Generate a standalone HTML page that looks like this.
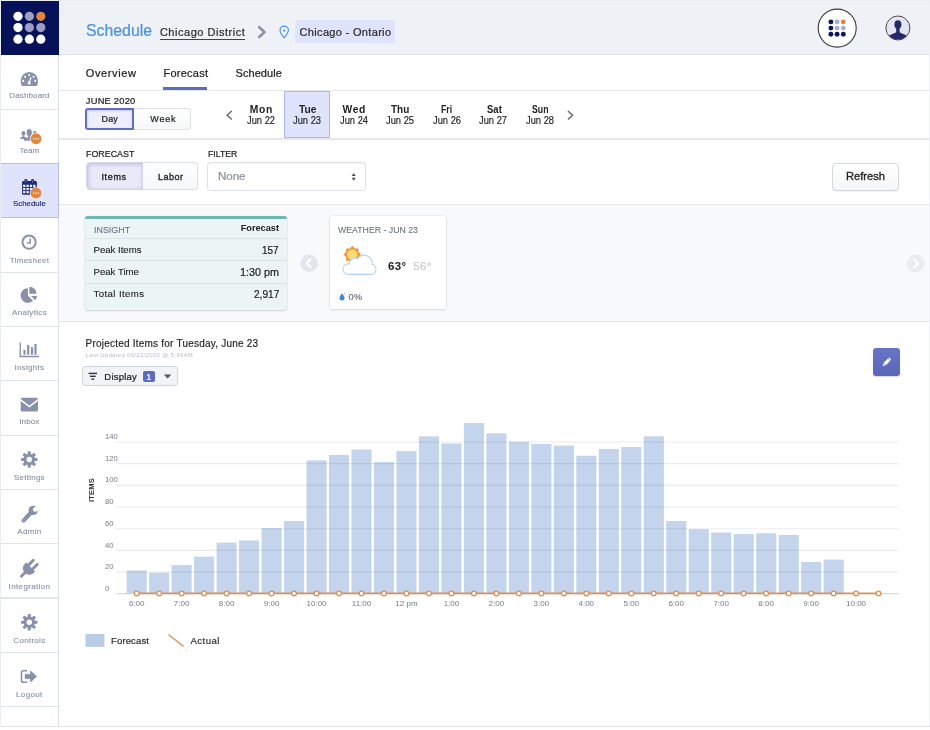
<!DOCTYPE html>
<html lang="en"><head><meta charset="utf-8"><title>Schedule - Forecast</title>
<style>
html,body{margin:0;padding:0;}
body{width:930px;height:730px;position:relative;overflow:hidden;background:#fff;font-family:"Liberation Sans",Arial,sans-serif;}
.t{position:absolute;white-space:nowrap;line-height:1;}
.b{position:absolute;box-sizing:border-box;}
svg{position:absolute;overflow:visible;}
.tx{position:absolute;left:0;top:0;width:930px;height:730px;will-change:transform;}
</style></head><body>
<div class="b" style="left:59px;top:0px;width:870px;height:55px;background:#eef2f6;border-bottom:1px solid #dde2ea;border-top:1px solid #e6e9ef;"></div>
<div class="b" style="left:929px;top:0px;width:1px;height:727px;background:#eef0f5;"></div>
<div class="b" style="left:0px;top:726px;width:930px;height:1.4px;background:#e0e1e4;"></div>
<div class="b" style="left:0px;top:55px;width:59.1px;height:671px;background:#fff;border-left:1.2px solid #dce0ec;border-right:1.2px solid #dce0ec;"></div>
<div class="b" style="left:1px;top:108.75px;width:57px;height:1.15px;background:#dfe3ed;"></div>
<div class="b" style="left:1px;top:271.65px;width:57px;height:1.15px;background:#dfe3ed;"></div>
<div class="b" style="left:1px;top:325.95px;width:57px;height:1.15px;background:#dfe3ed;"></div>
<div class="b" style="left:1px;top:380.24999999999994px;width:57px;height:1.15px;background:#dfe3ed;"></div>
<div class="b" style="left:1px;top:434.54999999999995px;width:57px;height:1.15px;background:#dfe3ed;"></div>
<div class="b" style="left:1px;top:488.84999999999997px;width:57px;height:1.15px;background:#dfe3ed;"></div>
<div class="b" style="left:1px;top:543.15px;width:57px;height:1.15px;background:#dfe3ed;"></div>
<div class="b" style="left:1px;top:597.45px;width:57px;height:1.15px;background:#dfe3ed;"></div>
<div class="b" style="left:1px;top:651.75px;width:57px;height:1.15px;background:#dfe3ed;"></div>
<div class="b" style="left:1px;top:706.05px;width:57px;height:1.15px;background:#dfe3ed;"></div>
<div class="b" style="left:0px;top:163.1px;width:59px;height:54.8px;background:#dfe3fb;border:1px solid #b4bcf0;"></div>
<div class="b" style="left:0px;top:0px;width:59px;height:55px;background:#07115a;"></div>
<div class="b" style="left:59px;top:90px;width:870px;height:1.3px;background:#e6e7ea;"></div>
<div class="b" style="left:59px;top:138.4px;width:870px;height:1.2px;background:#e6e7ea;"></div>
<div class="b" style="left:59px;top:205px;width:870px;height:116px;background:#f8f9fb;"></div>
<div class="b" style="left:59px;top:204px;width:870px;height:1.2px;background:#e9e9eb;"></div>
<div class="b" style="left:59px;top:321px;width:870px;height:1px;background:#e4e6e9;"></div>
<div class="b" style="left:0px;top:0px;width:930px;height:1px;background:#e9ecf1;"></div>
<div class="b" style="left:0px;top:0px;width:1px;height:727px;background:#e9ecf3;"></div>
<div class="b" style="left:294.8px;top:20.2px;width:100px;height:22.6px;background:#dfe3fb;border-radius:3px;"></div>
<div class="b" style="left:159.9px;top:38.5px;width:85px;height:1.2px;background:#444;"></div>
<div class="b" style="left:162.9px;top:87.2px;width:44.6px;height:2.5px;background:#5c6bc0;"></div>
<div class="b" style="left:133px;top:108.3px;width:57.7px;height:21.3px;background:linear-gradient(#fff,#f6f7f9);border:1px solid #dcdfe7;border-left:none;border-radius:0 4px 4px 0;"></div>
<div class="b" style="left:85.3px;top:108.2px;width:48.7px;height:21.4px;background:#eceefb;border:2px solid #6270c2;border-radius:3px 0 0 3px;box-shadow:inset 0 1px 2px rgba(60,70,140,.25);"></div>
<div class="b" style="left:284px;top:91.1px;width:46.3px;height:47.1px;background:#dfe3fb;border:1px solid #adb6ea;"></div>
<div class="b" style="left:142px;top:162.2px;width:55.9px;height:28.3px;background:linear-gradient(#fff,#f6f7f9);border:1px solid #dcdfe7;border-left:none;border-radius:0 4px 4px 0;"></div>
<div class="b" style="left:85.5px;top:162.2px;width:57.2px;height:28.3px;background:#e8eaf7;border:1px solid #d3d7ec;border-radius:4px 0 0 4px;box-shadow:inset 1px 1px 4px rgba(92,107,192,.38);"></div>
<div class="b" style="left:206.8px;top:162.2px;width:159.2px;height:28.4px;background:#fff;border:1px solid #dcdfe6;border-radius:3.5px;box-shadow:inset 0 1px 1px rgba(0,0,0,.03);"></div>
<div class="b" style="left:832.2px;top:162.9px;width:66.5px;height:28.3px;background:linear-gradient(#fff,#f5f6f8);border:1px solid #d3d7df;border-radius:4px;box-shadow:0 1px 1px rgba(0,0,0,.05);"></div>
<div class="b" style="left:85.3px;top:216.1px;width:202px;height:93.5px;background:#ecf5f6;border-radius:3px;box-shadow:0 0 0 .6px rgba(0,0,0,.05),0 1px 2px rgba(0,0,0,.13);overflow:hidden;"><div style="height:3.2px;background:#6db7b7"></div></div>
<div class="b" style="left:85.3px;top:238.2px;width:202px;height:1px;background:#dbe5e7;"></div>
<div class="b" style="left:85.3px;top:260.3px;width:202px;height:1px;background:#dbe5e7;"></div>
<div class="b" style="left:85.3px;top:282.5px;width:202px;height:1px;background:#dbe5e7;"></div>
<div class="b" style="left:330px;top:216.2px;width:116.3px;height:93.3px;background:#fff;border-radius:3px;box-shadow:0 0 0 1px rgba(0,0,0,.04),0 1px 3px rgba(0,0,0,.10);"></div>
<div class="b" style="left:82.3px;top:366px;width:95.7px;height:20.3px;background:#f0f3f8;border:1px solid #cfd5e0;border-radius:3px;"></div>
<div class="b" style="left:142.8px;top:370.6px;width:12.1px;height:11.7px;background:#5c6bc0;border-radius:2px;"></div>
<div class="b" style="left:873px;top:348px;width:27.3px;height:28.2px;background:linear-gradient(#6875c6,#5a66b7);border-radius:3px;box-shadow:0 1px 1px rgba(0,0,0,.15);"></div>
<svg width="930" height="730" viewBox="0 0 930 730" style="left:0;top:0"><circle cx="18.00" cy="16.30" r="4.6" fill="#fff" /><circle cx="29.40" cy="16.30" r="4.6" fill="#9b9fc1" /><circle cx="40.80" cy="16.30" r="4.6" fill="#e0873d" /><circle cx="18.00" cy="27.60" r="4.6" fill="#fff" /><circle cx="29.40" cy="27.60" r="4.6" fill="#9b9fc1" /><circle cx="40.80" cy="27.60" r="4.6" fill="#9b9fc1" /><circle cx="18.00" cy="39.20" r="4.6" fill="#fff" /><circle cx="29.40" cy="39.20" r="4.6" fill="#fff" /><circle cx="40.80" cy="39.20" r="4.6" fill="#fff" /><circle cx="837.20" cy="28.10" r="19.0" fill="#fff" stroke="#3c3c3c" stroke-width="1.1"/><circle cx="830.90" cy="21.90" r="2.45" fill="#0c1559" /><circle cx="837.10" cy="21.90" r="2.45" fill="#a9add0" /><circle cx="843.30" cy="21.90" r="2.45" fill="#e0873d" /><circle cx="830.90" cy="28.10" r="2.45" fill="#0c1559" /><circle cx="837.10" cy="28.10" r="2.45" fill="#a9add0" /><circle cx="843.30" cy="28.10" r="2.45" fill="#a9add0" /><circle cx="830.90" cy="34.30" r="2.45" fill="#0c1559" /><circle cx="837.10" cy="34.30" r="2.45" fill="#0c1559" /><circle cx="843.30" cy="34.30" r="2.45" fill="#0c1559" /><clipPath id="av"><circle cx="897.9" cy="28" r="11.6"/></clipPath><circle cx="897.90" cy="28.00" r="12.0" fill="#e4e4f2" stroke="#4a4a55" stroke-width="1"/><g clip-path="url(#av)" fill="#232a66"><ellipse cx="897.9" cy="24.6" rx="3.5" ry="4.4"/><path d="M896.2 27.5h3.4v4.2c0 .9 1.2 1.4 3.2 2.1 2.6.9 4.4 2 5.2 4.2v3h-20.2v-3c.8-2.2 2.6-3.3 5.2-4.2 2-.7 3.2-1.2 3.2-2.1z"/></g><polyline points="259.2,27.2 264.6,32.1 259.2,37" fill="none" stroke="#8b90a4" stroke-width="2.6" stroke-linejoin="round" stroke-linecap="round"/><path d="M284.2 37.900c-2.900-3.600-4.200-5.700-4.200-7.600a4.200 4.200 0 0 1 8.400 0c0 1.900-1.300 4-4.200 7.600z" fill="none" stroke="#4a90e2" stroke-width="1.150" stroke-linejoin="round"/><circle cx="284.20" cy="30.60" r="1.15" fill="#4a90e2" /><polyline points="231.8,110.9 227.1,115.2 231.8,119.5" fill="none" stroke="#5f6577" stroke-width="1.4"/><polyline points="567.9,110.9 572.6,115.2 567.9,119.5" fill="none" stroke="#5f6577" stroke-width="1.4"/><path d="M351.600 176l2.100-3 2.100 3zM351.600 177.700l2.100 3 2.100-3z" fill="#555"/><circle cx="309.00" cy="263.20" r="8.7" fill="#e4e5ec" /><polyline points="310.6,259.2 306.8,263.2 310.600,267.200" fill="none" stroke="#fff" stroke-width="2" stroke-linecap="round" stroke-linejoin="round"/><circle cx="915.70" cy="263.40" r="8.9" fill="#ebecf1" /><polyline points="914.3,259.4 918.1,263.4 914.300,267.400" fill="none" stroke="#fff" stroke-width="2" stroke-linecap="round" stroke-linejoin="round"/><polygon points="352.30,245.80 354.83,248.50 358.52,248.38 358.40,252.07 361.10,254.60 358.40,257.13 358.52,260.82 354.83,260.70 352.30,263.40 349.77,260.70 346.08,260.82 346.20,257.13 343.50,254.60 346.20,252.07 346.08,248.38 349.77,248.50" fill="#e9973f"/><circle cx="352.30" cy="254.60" r="5.3" fill="#f8dc72" /><circle cx="348.30" cy="269.20" r="4.9" fill="#fff" stroke="#b5d2f2" stroke-width="2"/><circle cx="355.20" cy="264.20" r="5.6" fill="#fff" stroke="#b5d2f2" stroke-width="2"/><circle cx="364.20" cy="263.20" r="7.6" fill="#fff" stroke="#b5d2f2" stroke-width="2"/><circle cx="370.60" cy="269.20" r="4.9" fill="#fff" stroke="#b5d2f2" stroke-width="2"/><rect x="348.3" y="266" width="22.3" height="8.1" fill="#fff" stroke="#b5d2f2" stroke-width="2"/><circle cx="348.30" cy="269.20" r="4.800000000000001" fill="#fff" /><circle cx="355.20" cy="264.20" r="5.5" fill="#fff" /><circle cx="364.20" cy="263.20" r="7.5" fill="#fff" /><circle cx="370.60" cy="269.20" r="4.800000000000001" fill="#fff" /><rect x="348.3" y="265" width="22.3" height="8.6" fill="#fff"/><path d="M342 293.200c1.500 2 2.500 3.400 2.500 4.800a2.500 2.500 0 0 1 -5 0c0-1.400 1-2.800 2.500-4.800z" fill="#3f86dc"/><path d="M344.600 292.300l.7 1.500-.9.300z" fill="#3f86dc"/><line x1="88.6" y1="373.4" x2="97.0" y2="373.4" stroke="#333" stroke-width="1.4"/><line x1="89.9" y1="376.3" x2="95.7" y2="376.3" stroke="#333" stroke-width="1.4"/><line x1="91.4" y1="379.1" x2="94.2" y2="379.1" stroke="#333" stroke-width="1.4"/><path d="M163.900 374.400h7.400l-3.700 4.200z" fill="#555"/><g transform="translate(886.6,362.100) rotate(-45) scale(.86)" fill="#fff"><rect x="-3.100" y="-1.900" width="6.800" height="3.800" rx=".4"/><path d="M-3.800 -1.900v3.800l-2.700-1.900z"/><rect x="4.300" y="-1.900" width="1.500" height="3.800" rx=".6"/></g><path d="M22 86C20.500 83.500 20.700 80.650 20.700 80.650A8.650 8.650 0 0 1 38 80.650C38 80.650 38.200 83.500 36.700 86z" fill="#8891a9"/><circle cx="23.20" cy="80.90" r="1.05" fill="#fff" /><circle cx="25.05" cy="76.75" r="1.05" fill="#fff" /><circle cx="29.15" cy="75.00" r="1.05" fill="#fff" /><circle cx="33.60" cy="76.75" r="1.05" fill="#fff" /><circle cx="35.30" cy="80.90" r="1.05" fill="#fff" /><line x1="29.300" y1="82.600" x2="30.800" y2="77.600" stroke="#fff" stroke-width="1.200" stroke-linecap="round"/><circle cx="29.15" cy="82.90" r="1.6" fill="#fff" /><g fill="#8791a9"><ellipse cx="23.400" cy="133.400" rx="1.900" ry="2.400"/><path d="M20.100 138.900c0-1.100.6-1.600 1.600-1.900l1.100-.4v-1.400h1.400v1.400l1.100.4c1 .3 1.600.8 1.600 1.900z"/><ellipse cx="34.900" cy="133.400" rx="1.900" ry="2.400"/><path d="M31.600 138.900c0-1.100.6-1.600 1.600-1.900l1.100-.4v-1.400h1.400v1.400l1.100.4c1 .3 1.600.8 1.600 1.900z"/><ellipse cx="29.250" cy="132.600" rx="2.600" ry="3.650"/><path d="M23.800 140.800c0-1.600.9-2.300 2.400-2.800l2-.7v-2.300h2.200v2.300l2 .7c1.500.5 2.400 1.200 2.400 2.800z"/></g><circle cx="36.05" cy="138.80" r="5.75" fill="#e0873d" stroke="#fff" stroke-width=".7"/><circle cx="33.75" cy="138.80" r="0.75" fill="#fff" opacity=".85"/><circle cx="36.05" cy="138.80" r="0.75" fill="#fff" opacity=".85"/><circle cx="38.35" cy="138.80" r="0.75" fill="#fff" opacity=".85"/><rect x="22.100" y="181" width="14.800" height="13.800" rx="1.300" fill="#202a72"/><rect x="24.40" y="178.900" width="3" height="4.200" rx="1.400" fill="#202a72"/><rect x="25.45" y="180.300" width=".9" height="2.300" rx=".4" fill="#8f96cf"/><rect x="31.10" y="178.900" width="3" height="4.200" rx="1.400" fill="#202a72"/><rect x="32.15" y="180.300" width=".9" height="2.300" rx=".4" fill="#8f96cf"/><rect x="23.1" y="184.75" width="2.300" height="2.250" fill="#eef0fd"/><rect x="26.45" y="184.75" width="2.300" height="2.250" fill="#eef0fd"/><rect x="29.8" y="184.75" width="2.300" height="2.250" fill="#eef0fd"/><rect x="33.15" y="184.75" width="2.300" height="2.250" fill="#eef0fd"/><rect x="23.1" y="187.9" width="2.300" height="2.250" fill="#eef0fd"/><rect x="26.45" y="187.9" width="2.300" height="2.250" fill="#eef0fd"/><rect x="29.8" y="187.9" width="2.300" height="2.250" fill="#eef0fd"/><rect x="33.15" y="187.9" width="2.300" height="2.250" fill="#eef0fd"/><rect x="23.1" y="191.05" width="2.300" height="2.250" fill="#eef0fd"/><rect x="26.45" y="191.05" width="2.300" height="2.250" fill="#eef0fd"/><rect x="29.8" y="191.05" width="2.300" height="2.250" fill="#eef0fd"/><rect x="33.15" y="191.05" width="2.300" height="2.250" fill="#eef0fd"/><circle cx="36.00" cy="193.00" r="5.75" fill="#e0873d" stroke="#e6e9fc" stroke-width=".7"/><circle cx="33.70" cy="193.00" r="0.75" fill="#fff" opacity=".85"/><circle cx="36.00" cy="193.00" r="0.75" fill="#fff" opacity=".85"/><circle cx="38.30" cy="193.00" r="0.75" fill="#fff" opacity=".85"/><circle cx="29.10" cy="242.20" r="6.6" fill="none" stroke="#8891a9" stroke-width="2"/><polyline points="30.200,238.500 30.200,243.100 26.800,243.100" fill="none" stroke="#8891a9" stroke-width="1.500"/><path d="M27.900 288.200A7.300 7.300 0 1 0 33.060 300.660L27.900 295.500z" fill="#8891a9"/><path d="M29.400 286.800A7.200 7.200 0 0 1 36.600 293.800L29.400 293.800z" fill="#8891a9"/><path d="M30.900 295.900h6.200a6.200 6.200 0 0 1 -1.900 4.400z" fill="#8891a9"/><polyline points="20.200,342.400 20.200,356.500 38.900,356.500" fill="none" stroke="#8891a9" stroke-width="1.350"/><rect x="23.4" y="349.9" width="2.200" height="4.8" fill="#8891a9"/><rect x="27.1" y="345.0" width="2.200" height="9.7" fill="#8891a9"/><rect x="30.9" y="347.2" width="2.200" height="7.5" fill="#8891a9"/><rect x="34.4" y="343.9" width="2.200" height="10.8" fill="#8891a9"/><rect x="20.700" y="397.800" width="17.300" height="13.600" rx="1.500" fill="#8891a9"/><polyline points="20.300,399.700 29.350,406.500 38.400,399.700" fill="none" stroke="#fff" stroke-width="1.500"/><g fill="#8891a9" transform="translate(29.27,459.5)"><circle r="5.75"/><rect x="-1.55" y="-8.25" width="3.1" height="4.500" rx=".9" transform="rotate(0.0)"/><rect x="-1.55" y="-8.25" width="3.1" height="4.500" rx=".9" transform="rotate(45.0)"/><rect x="-1.55" y="-8.25" width="3.1" height="4.500" rx=".9" transform="rotate(90.0)"/><rect x="-1.55" y="-8.25" width="3.1" height="4.500" rx=".9" transform="rotate(135.0)"/><rect x="-1.55" y="-8.25" width="3.1" height="4.500" rx=".9" transform="rotate(180.0)"/><rect x="-1.55" y="-8.25" width="3.1" height="4.500" rx=".9" transform="rotate(225.0)"/><rect x="-1.55" y="-8.25" width="3.1" height="4.500" rx=".9" transform="rotate(270.0)"/><rect x="-1.55" y="-8.25" width="3.1" height="4.500" rx=".9" transform="rotate(315.0)"/><circle r="2.7" fill="#fff"/></g><g fill="#8891a9" transform="translate(29.27,622.3)"><circle r="5.75"/><rect x="-1.55" y="-8.25" width="3.1" height="4.500" rx=".9" transform="rotate(0.0)"/><rect x="-1.55" y="-8.25" width="3.1" height="4.500" rx=".9" transform="rotate(45.0)"/><rect x="-1.55" y="-8.25" width="3.1" height="4.500" rx=".9" transform="rotate(90.0)"/><rect x="-1.55" y="-8.25" width="3.1" height="4.500" rx=".9" transform="rotate(135.0)"/><rect x="-1.55" y="-8.25" width="3.1" height="4.500" rx=".9" transform="rotate(180.0)"/><rect x="-1.55" y="-8.25" width="3.1" height="4.500" rx=".9" transform="rotate(225.0)"/><rect x="-1.55" y="-8.25" width="3.1" height="4.500" rx=".9" transform="rotate(270.0)"/><rect x="-1.55" y="-8.25" width="3.1" height="4.500" rx=".9" transform="rotate(315.0)"/><circle r="2.7" fill="#fff"/></g><line x1="23.500" y1="520.600" x2="30.600" y2="513" stroke="#8891a9" stroke-width="4.100" stroke-linecap="round"/><circle cx="33.20" cy="510.40" r="4.65" fill="#8891a9" /><g transform="translate(35.100,509.500) rotate(-25)" fill="#fff"><circle r="2.100"/><rect x="0" y="-2.100" width="6" height="4.200"/></g><circle cx="24.00" cy="520.00" r="0.7" fill="#b3b9c9" /><g transform="translate(26.960,570.600) rotate(45)" fill="#8891a9"><rect x="-4.300" y="-13.200" width="2.900" height="9" rx="1.400"/><rect x="1.400" y="-13.200" width="2.900" height="9" rx="1.400"/><path d="M-6.300 -5.200h12.600v1.800c0 4-2.800 6.400-6.300 6.400s-6.300-2.400-6.300-6.400z"/><rect x="-1.450" y="2" width="2.900" height="7.200" rx="1.300"/></g><path d="M26.600 670.700h-3a2.100 2.100 0 0 0 -2.100 2.100v7.400a2.100 2.100 0 0 0 2.100 2.100h3" fill="none" stroke="#8891a9" stroke-width="1.600" stroke-linecap="round"/><path d="M25 674.300h5.400v-3.600l6.300 5.800-6.300 5.800v-3.600h-5.400z" fill="#8891a9" stroke="#8891a9" stroke-width=".5" stroke-linejoin="round"/><rect x="126.60" y="570.5" width="20.100" height="23.3" fill="#c3d4ec"/><rect x="149.08" y="572.7" width="20.100" height="21.1" fill="#c3d4ec"/><rect x="171.57" y="565.1" width="20.100" height="28.7" fill="#c3d4ec"/><rect x="194.06" y="556.6" width="20.100" height="37.2" fill="#c3d4ec"/><rect x="216.54" y="542.6" width="20.100" height="51.2" fill="#c3d4ec"/><rect x="239.02" y="540.4" width="20.100" height="53.4" fill="#c3d4ec"/><rect x="261.51" y="528.1" width="20.100" height="65.7" fill="#c3d4ec"/><rect x="284.00" y="521" width="20.100" height="72.8" fill="#c3d4ec"/><rect x="306.48" y="460.4" width="20.100" height="133.4" fill="#c3d4ec"/><rect x="328.97" y="454.9" width="20.100" height="138.9" fill="#c3d4ec"/><rect x="351.45" y="449.5" width="20.100" height="144.3" fill="#c3d4ec"/><rect x="373.93" y="462.1" width="20.100" height="131.7" fill="#c3d4ec"/><rect x="396.42" y="451.1" width="20.100" height="142.7" fill="#c3d4ec"/><rect x="418.90" y="436.3" width="20.100" height="157.5" fill="#c3d4ec"/><rect x="441.39" y="443.4" width="20.100" height="150.4" fill="#c3d4ec"/><rect x="463.88" y="423.0" width="20.100" height="170.8" fill="#c3d4ec"/><rect x="486.36" y="433.3" width="20.100" height="160.5" fill="#c3d4ec"/><rect x="508.85" y="441.8" width="20.100" height="152.0" fill="#c3d4ec"/><rect x="531.33" y="444" width="20.100" height="149.8" fill="#c3d4ec"/><rect x="553.81" y="445.6" width="20.100" height="148.2" fill="#c3d4ec"/><rect x="576.30" y="455.8" width="20.100" height="138.0" fill="#c3d4ec"/><rect x="598.78" y="448.9" width="20.100" height="144.9" fill="#c3d4ec"/><rect x="621.27" y="447" width="20.100" height="146.8" fill="#c3d4ec"/><rect x="643.75" y="436.3" width="20.100" height="157.5" fill="#c3d4ec"/><rect x="666.24" y="521" width="20.100" height="72.8" fill="#c3d4ec"/><rect x="688.73" y="529.2" width="20.100" height="64.6" fill="#c3d4ec"/><rect x="711.21" y="532.5" width="20.100" height="61.3" fill="#c3d4ec"/><rect x="733.70" y="534.1" width="20.100" height="59.7" fill="#c3d4ec"/><rect x="756.18" y="533.3" width="20.100" height="60.5" fill="#c3d4ec"/><rect x="778.66" y="534.9" width="20.100" height="58.9" fill="#c3d4ec"/><rect x="801.15" y="562" width="20.100" height="31.8" fill="#c3d4ec"/><rect x="823.63" y="559.6" width="20.100" height="34.2" fill="#c3d4ec"/><line x1="116.400" y1="572.11" x2="898.800" y2="572.11" stroke="#1a2848" stroke-opacity=".085" stroke-width="1.100"/><line x1="116.400" y1="550.42" x2="898.800" y2="550.42" stroke="#1a2848" stroke-opacity=".085" stroke-width="1.100"/><line x1="116.400" y1="528.73" x2="898.800" y2="528.73" stroke="#1a2848" stroke-opacity=".085" stroke-width="1.100"/><line x1="116.400" y1="507.04" x2="898.800" y2="507.04" stroke="#1a2848" stroke-opacity=".085" stroke-width="1.100"/><line x1="116.400" y1="485.35" x2="898.800" y2="485.35" stroke="#1a2848" stroke-opacity=".085" stroke-width="1.100"/><line x1="116.400" y1="463.66" x2="898.800" y2="463.66" stroke="#1a2848" stroke-opacity=".085" stroke-width="1.100"/><line x1="116.400" y1="441.97" x2="898.800" y2="441.97" stroke="#1a2848" stroke-opacity=".085" stroke-width="1.100"/><line x1="116.400" y1="593.8" x2="898.800" y2="593.8" stroke="#c6cfdd" stroke-width="1.100"/><line x1="136.700" y1="593.400" x2="878.500" y2="593.400" stroke="#dc9257" stroke-width="1.600"/><circle cx="136.70" cy="593.40" r="2.35" fill="#fff" stroke="#dc9257" stroke-width="1.300"/><circle cx="159.18" cy="593.40" r="2.35" fill="#fff" stroke="#dc9257" stroke-width="1.300"/><circle cx="181.66" cy="593.40" r="2.35" fill="#fff" stroke="#dc9257" stroke-width="1.300"/><circle cx="204.14" cy="593.40" r="2.35" fill="#fff" stroke="#dc9257" stroke-width="1.300"/><circle cx="226.62" cy="593.40" r="2.35" fill="#fff" stroke="#dc9257" stroke-width="1.300"/><circle cx="249.10" cy="593.40" r="2.35" fill="#fff" stroke="#dc9257" stroke-width="1.300"/><circle cx="271.58" cy="593.40" r="2.35" fill="#fff" stroke="#dc9257" stroke-width="1.300"/><circle cx="294.06" cy="593.40" r="2.35" fill="#fff" stroke="#dc9257" stroke-width="1.300"/><circle cx="316.54" cy="593.40" r="2.35" fill="#fff" stroke="#dc9257" stroke-width="1.300"/><circle cx="339.02" cy="593.40" r="2.35" fill="#fff" stroke="#dc9257" stroke-width="1.300"/><circle cx="361.50" cy="593.40" r="2.35" fill="#fff" stroke="#dc9257" stroke-width="1.300"/><circle cx="383.98" cy="593.40" r="2.35" fill="#fff" stroke="#dc9257" stroke-width="1.300"/><circle cx="406.46" cy="593.40" r="2.35" fill="#fff" stroke="#dc9257" stroke-width="1.300"/><circle cx="428.94" cy="593.40" r="2.35" fill="#fff" stroke="#dc9257" stroke-width="1.300"/><circle cx="451.42" cy="593.40" r="2.35" fill="#fff" stroke="#dc9257" stroke-width="1.300"/><circle cx="473.90" cy="593.40" r="2.35" fill="#fff" stroke="#dc9257" stroke-width="1.300"/><circle cx="496.38" cy="593.40" r="2.35" fill="#fff" stroke="#dc9257" stroke-width="1.300"/><circle cx="518.86" cy="593.40" r="2.35" fill="#fff" stroke="#dc9257" stroke-width="1.300"/><circle cx="541.34" cy="593.40" r="2.35" fill="#fff" stroke="#dc9257" stroke-width="1.300"/><circle cx="563.82" cy="593.40" r="2.35" fill="#fff" stroke="#dc9257" stroke-width="1.300"/><circle cx="586.30" cy="593.40" r="2.35" fill="#fff" stroke="#dc9257" stroke-width="1.300"/><circle cx="608.78" cy="593.40" r="2.35" fill="#fff" stroke="#dc9257" stroke-width="1.300"/><circle cx="631.26" cy="593.40" r="2.35" fill="#fff" stroke="#dc9257" stroke-width="1.300"/><circle cx="653.74" cy="593.40" r="2.35" fill="#fff" stroke="#dc9257" stroke-width="1.300"/><circle cx="676.22" cy="593.40" r="2.35" fill="#fff" stroke="#dc9257" stroke-width="1.300"/><circle cx="698.70" cy="593.40" r="2.35" fill="#fff" stroke="#dc9257" stroke-width="1.300"/><circle cx="721.18" cy="593.40" r="2.35" fill="#fff" stroke="#dc9257" stroke-width="1.300"/><circle cx="743.66" cy="593.40" r="2.35" fill="#fff" stroke="#dc9257" stroke-width="1.300"/><circle cx="766.14" cy="593.40" r="2.35" fill="#fff" stroke="#dc9257" stroke-width="1.300"/><circle cx="788.62" cy="593.40" r="2.35" fill="#fff" stroke="#dc9257" stroke-width="1.300"/><circle cx="811.10" cy="593.40" r="2.35" fill="#fff" stroke="#dc9257" stroke-width="1.300"/><circle cx="833.58" cy="593.40" r="2.35" fill="#fff" stroke="#dc9257" stroke-width="1.300"/><circle cx="856.06" cy="593.40" r="2.35" fill="#fff" stroke="#dc9257" stroke-width="1.300"/><circle cx="878.54" cy="593.40" r="2.35" fill="#fff" stroke="#dc9257" stroke-width="1.300"/><rect x="85.500" y="634" width="18.900" height="12.900" fill="#b9cde9"/><line x1="168.400" y1="634.500" x2="183.500" y2="646.300" stroke="#e0955a" stroke-width="1.500"/></svg>
<div class="tx">
<span class="t" style="left:85.70px;top:21px;line-height:18px;font-size:16.5px;color:#4a90e2;transform:scaleX(0.9592);transform-origin:0 0;-webkit-text-stroke:0.22px #4a90e2;">Schedule</span>
<span class="t" style="left:159.90px;top:26px;line-height:12px;font-size:11px;color:#2b2b2b;letter-spacing:0.525px;-webkit-text-stroke:0.22px #2b2b2b;">Chicago District</span>
<span class="t" style="left:299.60px;top:26px;line-height:12px;font-size:11px;color:#2b2b2b;letter-spacing:0.325px;-webkit-text-stroke:0.22px #2b2b2b;">Chicago - Ontario</span>
<span class="t" style="left:85.70px;top:67px;line-height:12px;font-size:11px;color:#222;letter-spacing:0.637px;-webkit-text-stroke:0.22px #222;">Overview</span>
<span class="t" style="left:163.50px;top:67px;line-height:12px;font-size:11px;color:#222;letter-spacing:0.244px;-webkit-text-stroke:0.22px #222;">Forecast</span>
<span class="t" style="left:235.50px;top:67px;line-height:12px;font-size:11px;color:#222;letter-spacing:0.062px;-webkit-text-stroke:0.22px #222;">Schedule</span>
<span class="t" style="left:85.80px;top:96px;line-height:10px;font-size:9.3px;color:#222;letter-spacing:0.243px;-webkit-text-stroke:0.22px #222;">JUNE 2020</span>
<span class="t" style="left:101.60px;top:114px;line-height:10px;font-size:9px;color:#222;letter-spacing:0.098px;-webkit-text-stroke:0.22px #222;">Day</span>
<span class="t" style="left:150.30px;top:114px;line-height:10px;font-size:9px;color:#222;letter-spacing:0.819px;-webkit-text-stroke:0.22px #222;">Week</span>
<span class="t" style="left:249.70px;top:104px;line-height:11px;font-size:10.3px;color:#222;font-weight:700;letter-spacing:0.718px;">Mon</span>
<span class="t" style="left:246.70px;top:115px;line-height:11px;font-size:10px;color:#222;transform:scaleX(0.9326);transform-origin:0 0;-webkit-text-stroke:0.15px #222;">Jun 22</span>
<span class="t" style="left:298.80px;top:104px;line-height:11px;font-size:10.3px;color:#222;font-weight:700;transform:scaleX(0.9916);transform-origin:0 0;">Tue</span>
<span class="t" style="left:293.25px;top:115px;line-height:11px;font-size:10px;color:#222;transform:scaleX(0.9326);transform-origin:0 0;-webkit-text-stroke:0.15px #222;">Jun 23</span>
<span class="t" style="left:342.60px;top:104px;line-height:11px;font-size:10.3px;color:#222;font-weight:700;letter-spacing:0.522px;">Wed</span>
<span class="t" style="left:339.80px;top:115px;line-height:11px;font-size:10px;color:#222;transform:scaleX(0.9326);transform-origin:0 0;-webkit-text-stroke:0.15px #222;">Jun 24</span>
<span class="t" style="left:391.40px;top:104px;line-height:11px;font-size:10.3px;color:#222;font-weight:700;transform:scaleX(0.9695);transform-origin:0 0;">Thu</span>
<span class="t" style="left:386.35px;top:115px;line-height:11px;font-size:10px;color:#222;transform:scaleX(0.9326);transform-origin:0 0;-webkit-text-stroke:0.15px #222;">Jun 25</span>
<span class="t" style="left:441.30px;top:104px;line-height:11px;font-size:10.3px;color:#222;font-weight:700;transform:scaleX(0.8510);transform-origin:0 0;">Fri</span>
<span class="t" style="left:432.90px;top:115px;line-height:11px;font-size:10px;color:#222;transform:scaleX(0.9326);transform-origin:0 0;-webkit-text-stroke:0.15px #222;">Jun 26</span>
<span class="t" style="left:486.50px;top:104px;line-height:11px;font-size:10.3px;color:#222;font-weight:700;transform:scaleX(0.9234);transform-origin:0 0;">Sat</span>
<span class="t" style="left:479.45px;top:115px;line-height:11px;font-size:10px;color:#222;transform:scaleX(0.9326);transform-origin:0 0;-webkit-text-stroke:0.15px #222;">Jun 27</span>
<span class="t" style="left:531.70px;top:104px;line-height:11px;font-size:10.3px;color:#222;font-weight:700;transform:scaleX(0.8482);transform-origin:0 0;">Sun</span>
<span class="t" style="left:526.00px;top:115px;line-height:11px;font-size:10px;color:#222;transform:scaleX(0.9326);transform-origin:0 0;-webkit-text-stroke:0.15px #222;">Jun 28</span>
<span class="t" style="left:85.90px;top:148px;line-height:11px;font-size:9.5px;color:#222;transform:scaleX(0.9338);transform-origin:0 0;-webkit-text-stroke:0.22px #222;">FORECAST</span>
<span class="t" style="left:207.90px;top:148px;line-height:11px;font-size:9.5px;color:#222;transform:scaleX(0.9181);transform-origin:0 0;-webkit-text-stroke:0.22px #222;">FILTER</span>
<span class="t" style="left:101.40px;top:172px;line-height:10px;font-size:9px;color:#222;letter-spacing:0.674px;-webkit-text-stroke:0.33px #222;">Items</span>
<span class="t" style="left:158.00px;top:172px;line-height:10px;font-size:9px;color:#222;letter-spacing:0.495px;-webkit-text-stroke:0.33px #222;">Labor</span>
<span class="t" style="left:218.00px;top:170px;line-height:12px;font-size:11.5px;color:#8c919c;-webkit-text-stroke:0.22px #8c919c;">None</span>
<span class="t" style="left:846.00px;top:170px;line-height:12px;font-size:11.4px;color:#222;transform:scaleX(0.9770);transform-origin:0 0;-webkit-text-stroke:0.32px #222;">Refresh</span>
<span class="t" style="left:93.50px;top:225px;line-height:10px;font-size:9px;color:#6b7280;transform:scaleX(0.9890);transform-origin:0 0;-webkit-text-stroke:0.1px #6b7280;">INSIGHT</span>
<span class="t" style="left:240.70px;top:223px;line-height:10px;font-size:9.2px;color:#222;font-weight:700;">Forecast</span>
<span class="t" style="left:93.50px;top:244px;line-height:11px;font-size:9.6px;color:#222;-webkit-text-stroke:0.12px #222;">Peak Items</span>
<span class="t" style="left:93.50px;top:266px;line-height:11px;font-size:9.6px;color:#222;letter-spacing:0.006px;-webkit-text-stroke:0.12px #222;">Peak Time</span>
<span class="t" style="left:93.50px;top:288px;line-height:11px;font-size:9.6px;color:#222;letter-spacing:0.408px;-webkit-text-stroke:0.12px #222;">Total Items</span>
<span class="t" style="left:262.30px;top:244px;line-height:12px;font-size:11px;color:#222;transform:scaleX(0.9045);transform-origin:0 0;-webkit-text-stroke:0.22px #222;">157</span>
<span class="t" style="left:239.80px;top:266px;line-height:12px;font-size:11px;color:#222;transform:scaleX(0.9837);transform-origin:0 0;-webkit-text-stroke:0.22px #222;">1:30 pm</span>
<span class="t" style="left:253.60px;top:288px;line-height:12px;font-size:11px;color:#222;transform:scaleX(0.9191);transform-origin:0 0;-webkit-text-stroke:0.22px #222;">2,917</span>
<span class="t" style="left:338.40px;top:225px;line-height:10px;font-size:9px;color:#6b7280;transform:scaleX(0.9704);transform-origin:0 0;-webkit-text-stroke:0.1px #6b7280;">WEATHER - JUN 23</span>
<span class="t" style="left:388.00px;top:260px;line-height:12px;font-size:11.5px;color:#222;font-weight:700;letter-spacing:0.305px;">63°</span>
<span class="t" style="left:413.30px;top:260px;line-height:12px;font-size:11.5px;color:#cbcbcb;letter-spacing:0.305px;-webkit-text-stroke:0.22px #cbcbcb;">56°</span>
<span class="t" style="left:348.60px;top:292px;line-height:10px;font-size:9.2px;color:#6b7280;letter-spacing:0.303px;-webkit-text-stroke:0.22px #6b7280;">0%</span>
<span class="t" style="left:85.60px;top:338px;line-height:11px;font-size:10px;color:#222;letter-spacing:0.217px;-webkit-text-stroke:0.15px #222;">Projected Items for Tuesday, June 23</span>
<span class="t" style="left:85.60px;top:352px;line-height:6px;font-size:6px;color:#b9bcc4;letter-spacing:0.313px;">Last Updated 06/22/2020 @ 5:34AM</span>
<span class="t" style="left:104.30px;top:371px;line-height:11px;font-size:9.5px;color:#222;letter-spacing:0.225px;-webkit-text-stroke:0.22px #222;">Display</span>
<span class="t" style="left:146.35px;top:372px;line-height:10px;font-size:9px;color:#fff;-webkit-text-stroke:0.22px #fff;">1</span>
<span class="t" style="left:105.00px;top:584px;line-height:9px;font-size:7.7px;color:#747a87;">0</span>
<span class="t" style="left:105.00px;top:562px;line-height:9px;font-size:7.7px;color:#747a87;">20</span>
<span class="t" style="left:105.00px;top:541px;line-height:9px;font-size:7.7px;color:#747a87;">40</span>
<span class="t" style="left:105.00px;top:519px;line-height:9px;font-size:7.7px;color:#747a87;">60</span>
<span class="t" style="left:105.00px;top:497px;line-height:9px;font-size:7.7px;color:#747a87;">80</span>
<span class="t" style="left:105.00px;top:475px;line-height:9px;font-size:7.7px;color:#747a87;">100</span>
<span class="t" style="left:105.00px;top:454px;line-height:9px;font-size:7.7px;color:#747a87;">120</span>
<span class="t" style="left:105.00px;top:432px;line-height:9px;font-size:7.7px;color:#747a87;">140</span>
<span class="t" style="left:128.91px;top:599px;line-height:9px;font-size:8px;color:#747a87;">6:00</span>
<span class="t" style="left:173.87px;top:599px;line-height:9px;font-size:8px;color:#747a87;">7:00</span>
<span class="t" style="left:218.83px;top:599px;line-height:9px;font-size:8px;color:#747a87;">8:00</span>
<span class="t" style="left:263.79px;top:599px;line-height:9px;font-size:8px;color:#747a87;">9:00</span>
<span class="t" style="left:306.53px;top:599px;line-height:9px;font-size:8px;color:#747a87;">10:00</span>
<span class="t" style="left:351.79px;top:599px;line-height:9px;font-size:8px;color:#747a87;">11:00</span>
<span class="t" style="left:395.34px;top:599px;line-height:9px;font-size:8px;color:#747a87;">12 pm</span>
<span class="t" style="left:443.63px;top:599px;line-height:9px;font-size:8px;color:#747a87;">1:00</span>
<span class="t" style="left:488.59px;top:599px;line-height:9px;font-size:8px;color:#747a87;">2:00</span>
<span class="t" style="left:533.55px;top:599px;line-height:9px;font-size:8px;color:#747a87;">3:00</span>
<span class="t" style="left:578.51px;top:599px;line-height:9px;font-size:8px;color:#747a87;">4:00</span>
<span class="t" style="left:623.47px;top:599px;line-height:9px;font-size:8px;color:#747a87;">5:00</span>
<span class="t" style="left:668.43px;top:599px;line-height:9px;font-size:8px;color:#747a87;">6:00</span>
<span class="t" style="left:713.39px;top:599px;line-height:9px;font-size:8px;color:#747a87;">7:00</span>
<span class="t" style="left:758.35px;top:599px;line-height:9px;font-size:8px;color:#747a87;">8:00</span>
<span class="t" style="left:803.31px;top:599px;line-height:9px;font-size:8px;color:#747a87;">9:00</span>
<span class="t" style="left:846.05px;top:599px;line-height:9px;font-size:8px;color:#747a87;">10:00</span>
<span class="t" style="left:91.6px;top:489.7px;font-size:7.6px;font-weight:700;color:#333;letter-spacing:.2px;transform:translate(-50%,-50%) rotate(-90deg);">ITEMS</span>
<span class="t" style="left:111.00px;top:635px;line-height:11px;font-size:9.6px;color:#333;letter-spacing:0.093px;-webkit-text-stroke:0.22px #333;">Forecast</span>
<span class="t" style="left:190.40px;top:635px;line-height:11px;font-size:9.6px;color:#333;letter-spacing:0.464px;-webkit-text-stroke:0.22px #333;">Actual</span>
<span class="t" style="left:9.30px;top:91px;line-height:9px;font-size:8px;color:#8891a9;letter-spacing:0.133px;-webkit-text-stroke:0.12px #8891a9;">Dashboard</span>
<span class="t" style="left:19.60px;top:146px;line-height:9px;font-size:8px;color:#8891a9;letter-spacing:0.012px;-webkit-text-stroke:0.12px #8891a9;">Team</span>
<span class="t" style="left:12.80px;top:199px;line-height:9px;font-size:8px;color:#1d2570;transform:scaleX(0.9862);transform-origin:0 0;-webkit-text-stroke:0.12px #1d2570;">Schedule</span>
<span class="t" style="left:9.80px;top:256px;line-height:9px;font-size:8px;color:#8891a9;letter-spacing:0.269px;-webkit-text-stroke:0.12px #8891a9;">Timesheet</span>
<span class="t" style="left:12.00px;top:308px;line-height:9px;font-size:8px;color:#8891a9;letter-spacing:0.336px;-webkit-text-stroke:0.12px #8891a9;">Analytics</span>
<span class="t" style="left:14.60px;top:363px;line-height:9px;font-size:8px;color:#8891a9;letter-spacing:0.261px;-webkit-text-stroke:0.12px #8891a9;">Insights</span>
<span class="t" style="left:19.30px;top:417px;line-height:9px;font-size:8px;color:#8891a9;letter-spacing:0.082px;-webkit-text-stroke:0.12px #8891a9;">Inbox</span>
<span class="t" style="left:13.90px;top:473px;line-height:9px;font-size:8px;color:#8891a9;letter-spacing:0.256px;-webkit-text-stroke:0.12px #8891a9;">Settings</span>
<span class="t" style="left:17.30px;top:527px;line-height:9px;font-size:8px;color:#8891a9;letter-spacing:0.306px;-webkit-text-stroke:0.12px #8891a9;">Admin</span>
<span class="t" style="left:8.60px;top:582px;line-height:9px;font-size:8px;color:#8891a9;letter-spacing:0.360px;-webkit-text-stroke:0.12px #8891a9;">Integration</span>
<span class="t" style="left:13.30px;top:636px;line-height:9px;font-size:8px;color:#8891a9;letter-spacing:0.302px;-webkit-text-stroke:0.12px #8891a9;">Controls</span>
<span class="t" style="left:16.10px;top:690px;line-height:9px;font-size:8px;color:#8891a9;letter-spacing:0.326px;-webkit-text-stroke:0.12px #8891a9;">Logout</span>
</div>
</body></html>
